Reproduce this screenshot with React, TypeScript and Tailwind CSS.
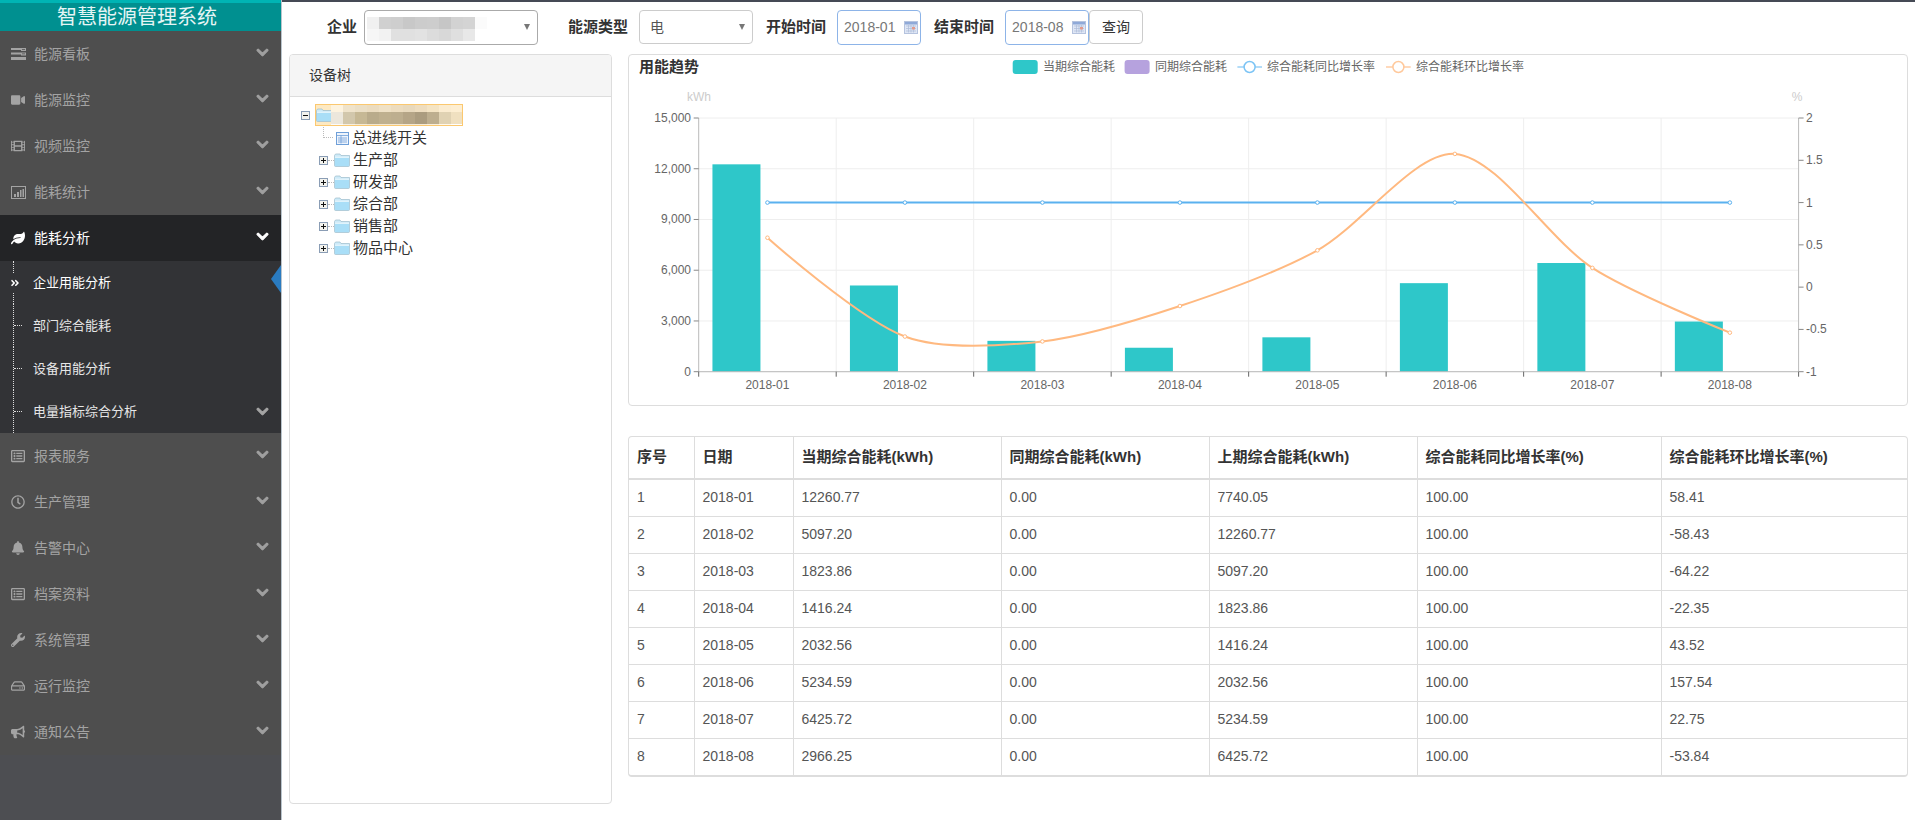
import {
  FaBell, FaBullhorn, FaChevronDown, FaFilm, FaLeaf, FaRegClock, FaRegHdd, FaRegListAlt, FaVideo, FaWrench, FaAngleDoubleRight,
} from "react-icons/fa";
import type { ReactNode } from "react";

// chart geometry, page coordinates (the svg viewBox starts at the panel)
const plotL = 698.7;
const plotR = 1798.6;
const plotT = 118;
const plotB = 371.7;
const catW = (plotR - plotL) / 8;
const months = ["2018-01", "2018-02", "2018-03", "2018-04", "2018-05", "2018-06", "2018-07", "2018-08"];
const current = [12260.77, 5097.2, 1823.86, 1416.24, 2032.56, 5234.59, 6425.72, 2966.25];
const momRate = [0.5841, -0.5843, -0.6422, -0.2235, 0.4352, 1.5754, 0.2275, -0.5384];

const yLeft = (v: number) => plotB - (v / 15000) * (plotB - plotT);
const yRight = (v: number) => plotB - ((v + 1) / 3) * (plotB - plotT);
const xCat = (i: number) => plotL + catW * (i + 0.5);

// horizontal-tangent-ish smoothing, weaker than the default so the curve does not dip past the points
function smoothPath(pts: [number, number][], smooth: number) {
  const cps = pts.map((p, i) => {
    const prev = pts[i - 1];
    const next = pts[i + 1];
    if (!prev || !next) return { a: p, b: p };
    const vx = next[0] - prev[0];
    const vy = next[1] - prev[1];
    const l1 = Math.hypot(p[0] - prev[0], p[1] - prev[1]);
    const l2 = Math.hypot(next[0] - p[0], next[1] - p[1]);
    const r = l2 / (l1 + l2);
    return {
      a: [p[0] - vx * smooth * (1 - r), p[1] - vy * smooth * (1 - r)],
      b: [p[0] + vx * smooth * r, p[1] + vy * smooth * r],
    };
  });
  let d = `M${pts[0][0]} ${pts[0][1]}`;
  for (let i = 1; i < pts.length; i++) {
    d += ` C${cps[i - 1].b[0]} ${cps[i - 1].b[1]} ${cps[i].a[0]} ${cps[i].a[1]} ${pts[i][0]} ${pts[i][1]}`;
  }
  return d;
}

const rows = [
  ["1", "2018-01", "12260.77", "0.00", "7740.05", "100.00", "58.41"],
  ["2", "2018-02", "5097.20", "0.00", "12260.77", "100.00", "-58.43"],
  ["3", "2018-03", "1823.86", "0.00", "5097.20", "100.00", "-64.22"],
  ["4", "2018-04", "1416.24", "0.00", "1823.86", "100.00", "-22.35"],
  ["5", "2018-05", "2032.56", "0.00", "1416.24", "100.00", "43.52"],
  ["6", "2018-06", "5234.59", "0.00", "2032.56", "100.00", "157.54"],
  ["7", "2018-07", "6425.72", "0.00", "5234.59", "100.00", "22.75"],
  ["8", "2018-08", "2966.25", "0.00", "6425.72", "100.00", "-53.84"],
];
const headers = ["序号", "日期", "当期综合能耗(kWh)", "同期综合能耗(kWh)", "上期综合能耗(kWh)", "综合能耗同比增长率(%)", "综合能耗环比增长率(%)"];

function TasksIcon() {
  return (
    <svg width="15" height="12" viewBox="0 0 15 12" fill="currentColor">
      <path d="M0 0h15v3H10V2H0zM0 4.5h15v3h-5v-1H0zM0 9h15v3H0zM11 1h3v.7h-3zM11 5.5h3v.7h-3z" fillRule="evenodd" />
    </svg>
  );
}

function StatIcon() {
  return (
    <svg width="15" height="13" viewBox="0 0 15 13" fill="currentColor">
      <path d="M0 0h15v13H0zM1 1v11h13V1z" fillRule="evenodd" />
      <path d="M3 8h2v3H3zM6 6h2v5H6zM9 4h1.5v7H9zM11.5 3H13v8h-1.5z" />
    </svg>
  );
}

function NavItem({ icon, label, active }: { icon: ReactNode; label: string; active?: boolean }) {
  return (
    <div className={`flex h-[46px] items-center pl-[10px] pr-[12px] ${active ? "bg-[#232426] text-white" : "text-[#a3a3a3]"}`}>
      <span className="flex w-[16px] justify-center text-[14px]">{icon}</span>
      <span className="ml-[8px] flex-1 text-[14px]">{label}</span>
      <FaChevronDown className={`mb-[4px] text-[13px] stroke-[40] ${active ? "text-white" : "text-[#a0a0a0]"}`} />
    </div>
  );
}

function SubItem({ label, more }: { label: string; more?: boolean }) {
  return (
    <div className="flex h-[43px] items-center pr-[12px] text-[13px] text-[#e6e6e6]">
      <div className="ml-[13px] flex w-[9px] items-center self-stretch border-l border-dotted border-[#ddd]">
        <div className="w-full border-t border-dotted border-[#ddd]" />
      </div>
      <span className="ml-[11px] flex-1">{label}</span>
      {more && <FaChevronDown className="text-[13px] stroke-[40] text-[#a5a5a5]" />}
    </div>
  );
}

function Sidebar() {
  return (
    <aside className="flex w-[282px] shrink-0 flex-col border-r border-[#b9c4cc] bg-[#4d4e52]">
      <div className="h-[3px] bg-[#00b4b4]" />
      <div className="flex h-[28px] items-center justify-center pr-[7px] text-[20px] text-[#e6f5f5] bg-[#009090]">智慧能源管理系统</div>
      <div className="bg-[#4e4e4e]">
        <NavItem icon={<TasksIcon />} label="能源看板" />
        <NavItem icon={<FaVideo />} label="能源监控" />
        <NavItem icon={<FaFilm />} label="视频监控" />
        <NavItem icon={<StatIcon />} label="能耗统计" />
        <NavItem icon={<FaLeaf />} label="能耗分析" active />
        <div className="bg-[#323336]">
          <div className="relative flex h-[43px] items-center text-[13px] text-white">
            <div className="ml-[13px] flex w-[9px] flex-col self-stretch">
              <div className="h-[12px] border-l border-dotted border-[#ddd]" />
              <div className="flex-1" />
              <div className="h-[11px] border-l border-dotted border-[#ddd]" />
            </div>
            <FaAngleDoubleRight className="absolute left-[10px] top-[17px] text-[10px] text-white" />
            <span className="ml-[11px]">企业用能分析</span>
            <div className="absolute right-0 top-[4px] h-0 w-0 border-y-[14px] border-r-[10px] border-y-transparent border-r-[#2a7bc0]" />
          </div>
          <SubItem label="部门综合能耗" />
          <SubItem label="设备用能分析" />
          <SubItem label="电量指标综合分析" more />
        </div>
        <NavItem icon={<FaRegListAlt />} label="报表服务" />
        <NavItem icon={<FaRegClock />} label="生产管理" />
        <NavItem icon={<FaBell />} label="告警中心" />
        <NavItem icon={<FaRegListAlt />} label="档案资料" />
        <NavItem icon={<FaWrench />} label="系统管理" />
        <NavItem icon={<FaRegHdd />} label="运行监控" />
        <NavItem icon={<FaBullhorn />} label="通知公告" />
      </div>
    </aside>
  );
}

// blurred-out names, drawn as the mosaic the screenshot shows
function Mosaic({ cells, cell, width, height }: { cells: string[][]; cell: number; width: number; height: number }) {
  return (
    <svg width={width} height={height} className="block shrink-0">
      {cells.map((row, y) =>
        row.map((c, x) => <rect key={`${x}-${y}`} x={x * cell} y={y * cell} width={cell} height={cell} fill={c} />),
      )}
    </svg>
  );
}

const companyBlur = [
  ["#f0f0f0", "#d0d0d0", "#cecece", "#c8c8c8", "#cccccc", "#cdcdcd", "#c6c6c6", "#d2d2d2", "#d4d4d4", "#fbfbfb"],
  ["#f6f6f6", "#f2f2f2", "#e0e0e0", "#e0e0e0", "#e2e2e2", "#dcdcdc", "#d8d8d8", "#dfdfdf", "#e8e8e8", "#ffffff"],
];
const rootBlur = [
  ["#fdf3df", "#efe3cb", "#ebdfc6", "#ebdcc0", "#efe1c6", "#ecdcbf", "#e8d9bd", "#eeddbf", "#f4e4c4", "#fbecd0", "#fdeed2"],
  ["#ece7dc", "#d2c7ac", "#c6b895", "#b9ab8b", "#bfb08f", "#bdae8f", "#b5a587", "#ab9c7f", "#bdae8f", "#e0d2b3", "#f0e0c0"],
  ["#fbfbfb", "#f5efe2", "#f3ead6", "#f0e6d0", "#f2e7d1", "#f3e8d2", "#f2e8d3", "#f5ead4", "#f9efdb", "#fff8ea", "#ffffff"],
];

function CalendarIcon() {
  return (
    <svg width="14" height="13" viewBox="0 0 14 13" className="shrink-0">
      <rect x="0.5" y="0.5" width="13" height="12" fill="#dfe6f5" stroke="#b5c3de" />
      <rect x="1" y="1" width="12" height="2.5" fill="#8fa9d8" />
      <path d="M2 5h10M2 7.5h10M2 10h10M4.5 4v7.5M7 4v7.5M9.5 4v7.5" stroke="#aebbd8" strokeWidth="0.7" />
      <rect x="8" y="6" width="3" height="2.5" fill="#e29a8c" />
    </svg>
  );
}

function DateBox({ value }: { value: string }) {
  return (
    <div className="flex h-[35px] w-[84px] items-center justify-between rounded-[4px] border border-[#8db4e8] pl-[6px] pr-[2px] text-[14px] text-[#777]">
      {value}
      <CalendarIcon />
    </div>
  );
}

function Caret() {
  return <div className="h-0 w-0 border-x-[3.5px] border-t-[6px] border-x-transparent border-t-[#777]" />;
}

function Toolbar() {
  return (
    <div className="flex h-[52px] items-center pb-[2px] text-[15px] text-[#333]">
      <span className="ml-[45px] font-bold">企业</span>
      <div className="ml-[7px] flex h-[35px] w-[174px] items-center rounded-[4px] border border-[#aaa] pr-[7px]">
        <div className="ml-[2px] mt-[4px] overflow-hidden">
          <Mosaic cells={companyBlur} cell={12} width={120} height={24} />
        </div>
        <div className="ml-auto">
          <Caret />
        </div>
      </div>
      <span className="ml-[30px] font-bold">能源类型</span>
      <div className="ml-[11px] flex h-[34px] w-[114px] items-center justify-between rounded-[4px] border border-[#ccc] pl-[10px] pr-[7px] text-[14px] text-[#555]">
        电
        <Caret />
      </div>
      <span className="ml-[13px] font-bold">开始时间</span>
      <div className="ml-[11px]">
        <DateBox value="2018-01" />
      </div>
      <span className="ml-[13px] font-bold">结束时间</span>
      <div className="ml-[11px]">
        <DateBox value="2018-08" />
      </div>
      <button className="ml-0 h-[34px] w-[54px] rounded-[4px] border border-[#ccc] bg-white text-[14px] text-[#333]">查询</button>
    </div>
  );
}

function FolderIcon() {
  return (
    <svg width="16" height="14" viewBox="0 0 16 14" className="shrink-0">
      <path d="M0.5 2.5 L1.5 1 H6 L7 2.5 H15.5 V12.5 Q15.5 13.5 14.5 13.5 H1.5 Q0.5 13.5 0.5 12.5 Z" fill="#cdeaf8" stroke="#9bbccc" strokeWidth="0.7" />
      <path d="M1 5 H15 V12.5 Q15 13 14 13 H2 Q1 13 1 12.5 Z" fill="#a9def7" />
      <path d="M1 4.2 H15" stroke="#e8f6fc" />
    </svg>
  );
}

function ExpandBox({ open }: { open?: boolean }) {
  return (
    <svg width="9" height="9" viewBox="0 0 9 9" className="shrink-0">
      <rect x="0.5" y="0.5" width="8" height="8" fill="#f3f3ee" stroke="#8a9db5" />
      <path d={open ? "M2 4.5h5" : "M2 4.5h5M4.5 2v5"} stroke="#111" />
    </svg>
  );
}

function TreeRow({ label }: { label: string }) {
  return (
    <div className="flex h-[22px] items-center pl-[29px] text-[15px] text-[#333]">
      <ExpandBox />
      <div className="w-[6px] border-t border-dotted border-[#bbb]" />
      <FolderIcon />
      <span className="ml-[3px]">{label}</span>
    </div>
  );
}

function TreePanel() {
  return (
    <section className="h-[750px] w-[323px] shrink-0 overflow-hidden rounded-[4px] border border-[#ddd]">
      <div className="flex h-[42px] items-center border-b border-[#ddd] bg-[#f5f5f5] pl-[19px] text-[14px] text-[#333]">设备树</div>
      <div className="pt-[7px]">
        <div className="flex h-[22px] items-center pl-[11px]">
          <ExpandBox open />
          <div className="ml-[5px] flex h-[22px] w-[148px] items-center overflow-hidden border border-[#fbc86f] bg-[#fde9c2]">
            <FolderIcon />
            <div className="-ml-[1px] mt-[6px]">
              <Mosaic cells={rootBlur} cell={12} width={132} height={36} />
            </div>
          </div>
        </div>
        <div className="mt-[1px] flex h-[22px] items-center pl-[33px] text-[15px] text-[#333]">
          <div className="mb-[11px] h-[11px] w-[10px] border-b border-l border-dotted border-[#bbb]" />
          <svg width="13" height="13" viewBox="0 0 13 13" className="ml-[3px] shrink-0">
            <rect x="0.5" y="0.5" width="12" height="12" fill="#eef4fc" stroke="#6f9fd8" />
            <path d="M0.5 3.5h12M2 6h9M2 8h9M2 10h9M5 3.5v8" stroke="#6f9fd8" strokeWidth="0.8" />
          </svg>
          <span className="ml-[3px]">总进线开关</span>
        </div>
        <TreeRow label="生产部" />
        <TreeRow label="研发部" />
        <TreeRow label="综合部" />
        <TreeRow label="销售部" />
        <TreeRow label="物品中心" />
      </div>
    </section>
  );
}

function TrendChart() {
  const gridYs = [0, 1, 2, 3, 4, 5].map((i) => plotT + ((plotB - plotT) / 5) * i);
  const leftLabels = ["15,000", "12,000", "9,000", "6,000", "3,000", "0"];
  const rightLabels = ["2", "1.5", "1", "0.5", "0", "-0.5", "-1"];
  const orangePts = momRate.map((v, i) => [xCat(i), yRight(v)] as [number, number]);
  return (
    <section className="h-[352px] w-[1280px] rounded-[4px] border border-[#ddd]">
      <svg width="1278" height="350" viewBox="629 55 1278 350" className="block">
        <text x="639" y="72" fontSize="15" fontWeight="bold" fill="#333">用能趋势</text>

        <rect x="1012.7" y="60" width="25" height="14" rx="3" fill="#2ec7c9" />
        <text x="1043" y="71" fontSize="12" fill="#666">当期综合能耗</text>
        <rect x="1124.6" y="60" width="25" height="14" rx="3" fill="#b6a2de" />
        <text x="1155" y="71" fontSize="12" fill="#666">同期综合能耗</text>
        <path d="M1237.4 67H1262" stroke="#b3dcf8" strokeWidth="2" />
        <circle cx="1249.6" cy="67" r="5.5" fill="#fff" stroke="#7cc4f5" strokeWidth="1.5" />
        <text x="1267" y="71" fontSize="12" fill="#666">综合能耗同比增长率</text>
        <path d="M1386 67H1410.7" stroke="#ffd9bb" strokeWidth="2" />
        <circle cx="1398.4" cy="67" r="5.5" fill="#fff" stroke="#ffc99c" strokeWidth="1.5" />
        <text x="1416" y="71" fontSize="12" fill="#666">综合能耗环比增长率</text>

        <text x="699" y="101" fontSize="12" fill="#ccc" textAnchor="middle">kWh</text>
        <text x="1797" y="101" fontSize="12" fill="#ccc" textAnchor="middle">%</text>

        {gridYs.map((y) => (
          <path key={y} d={`M${plotL} ${y}H${plotR}`} stroke="#eee" />
        ))}
        {[1, 2, 3, 4, 5, 6, 7].map((i) => (
          <path key={i} d={`M${plotL + catW * i} ${plotT}V${plotB}`} stroke="#eee" />
        ))}

        {current.map((v, i) => (
          <rect key={months[i]} x={xCat(i) - 55} y={yLeft(v)} width="48" height={plotB - yLeft(v)} fill="#2ec7c9" />
        ))}

        <path d={`M${plotL} ${plotT}V${plotB}H${plotR}V${plotT}`} fill="none" stroke="#bbb" />
        {gridYs.map((y) => (
          <path key={y} d={`M${plotL - 5} ${y}H${plotL}`} stroke="#888" />
        ))}
        {[0, 1, 2, 3, 4, 5, 6, 7, 8].map((i) => (
          <path key={i} d={`M${plotL + catW * i} ${plotB}v5`} stroke="#666" />
        ))}
        {rightLabels.map((_, i) => (
          <path key={i} d={`M${plotR} ${plotT + ((plotB - plotT) / 6) * i}h5`} stroke="#888" />
        ))}

        {leftLabels.map((t, i) => (
          <text key={t} x="691" y={gridYs[i] + 4} fontSize="12" fill="#666" textAnchor="end">{t}</text>
        ))}
        {rightLabels.map((t, i) => (
          <text key={t} x="1806" y={plotT + ((plotB - plotT) / 6) * i + 4} fontSize="12" fill="#666">{t}</text>
        ))}
        {months.map((m, i) => (
          <text key={m} x={xCat(i)} y="388.5" fontSize="12" fill="#666" textAnchor="middle">{m}</text>
        ))}

        <path d={`M${xCat(0)} ${yRight(1)}H${xCat(7)}`} stroke="#5ab1ef" strokeWidth="2" />
        {months.map((m, i) => (
          <circle key={m} cx={xCat(i)} cy={yRight(1)} r="1.8" fill="#fff" stroke="#5ab1ef" strokeWidth="1" />
        ))}
        <path d={smoothPath(orangePts, 0.3)} fill="none" stroke="#ffb980" strokeWidth="2" />
        {orangePts.map((p) => (
          <circle key={p[0]} cx={p[0]} cy={p[1]} r="1.8" fill="#fff" stroke="#ffb980" strokeWidth="1" />
        ))}
      </svg>
    </section>
  );
}

function DataTable() {
  return (
    <div className="w-[1280px] overflow-hidden rounded-[4px] border-x border-t border-b-2 border-[#ddd]">
      <table className="w-[1278px] table-fixed border-collapse text-[14px] text-[#555]">
        <colgroup>
          <col className="w-[65px]" />
          <col className="w-[99px]" />
          <col className="w-[208px]" />
          <col className="w-[208px]" />
          <col className="w-[208px]" />
          <col className="w-[244px]" />
          <col className="w-[246px]" />
        </colgroup>
        <thead>
          <tr className="h-[42px] border-b-2 border-[#ddd]">
            {headers.map((h, i) => (
              <th key={h} className={`px-[8px] text-left text-[15px] font-bold text-[#333] ${i < 6 ? "border-r border-[#ddd]" : ""}`}>{h}</th>
            ))}
          </tr>
        </thead>
        <tbody>
          {rows.map((r, ri) => (
            <tr key={r[0]} className={`h-[37px] ${ri < 7 ? "border-b border-[#ddd]" : ""}`}>
              {r.map((c, i) => (
                <td key={i} className={`px-[8px] ${i < 6 ? "border-r border-[#ddd]" : ""}`}>{c}</td>
              ))}
            </tr>
          ))}
        </tbody>
      </table>
    </div>
  );
}

export default function App() {
  return (
    <div className="flex h-[820px] w-[1915px] overflow-hidden bg-white font-['Liberation_Sans','Noto_Sans_CJK_SC',sans-serif]">
      <Sidebar />
      <main className="min-w-0 flex-1 border-t-2 border-[#454a55]">
        <Toolbar />
        <div className="flex gap-[16px] pl-[7px]">
          <TreePanel />
          <div className="flex flex-col gap-[30px]">
            <TrendChart />
            <DataTable />
          </div>
        </div>
      </main>
    </div>
  );
}
